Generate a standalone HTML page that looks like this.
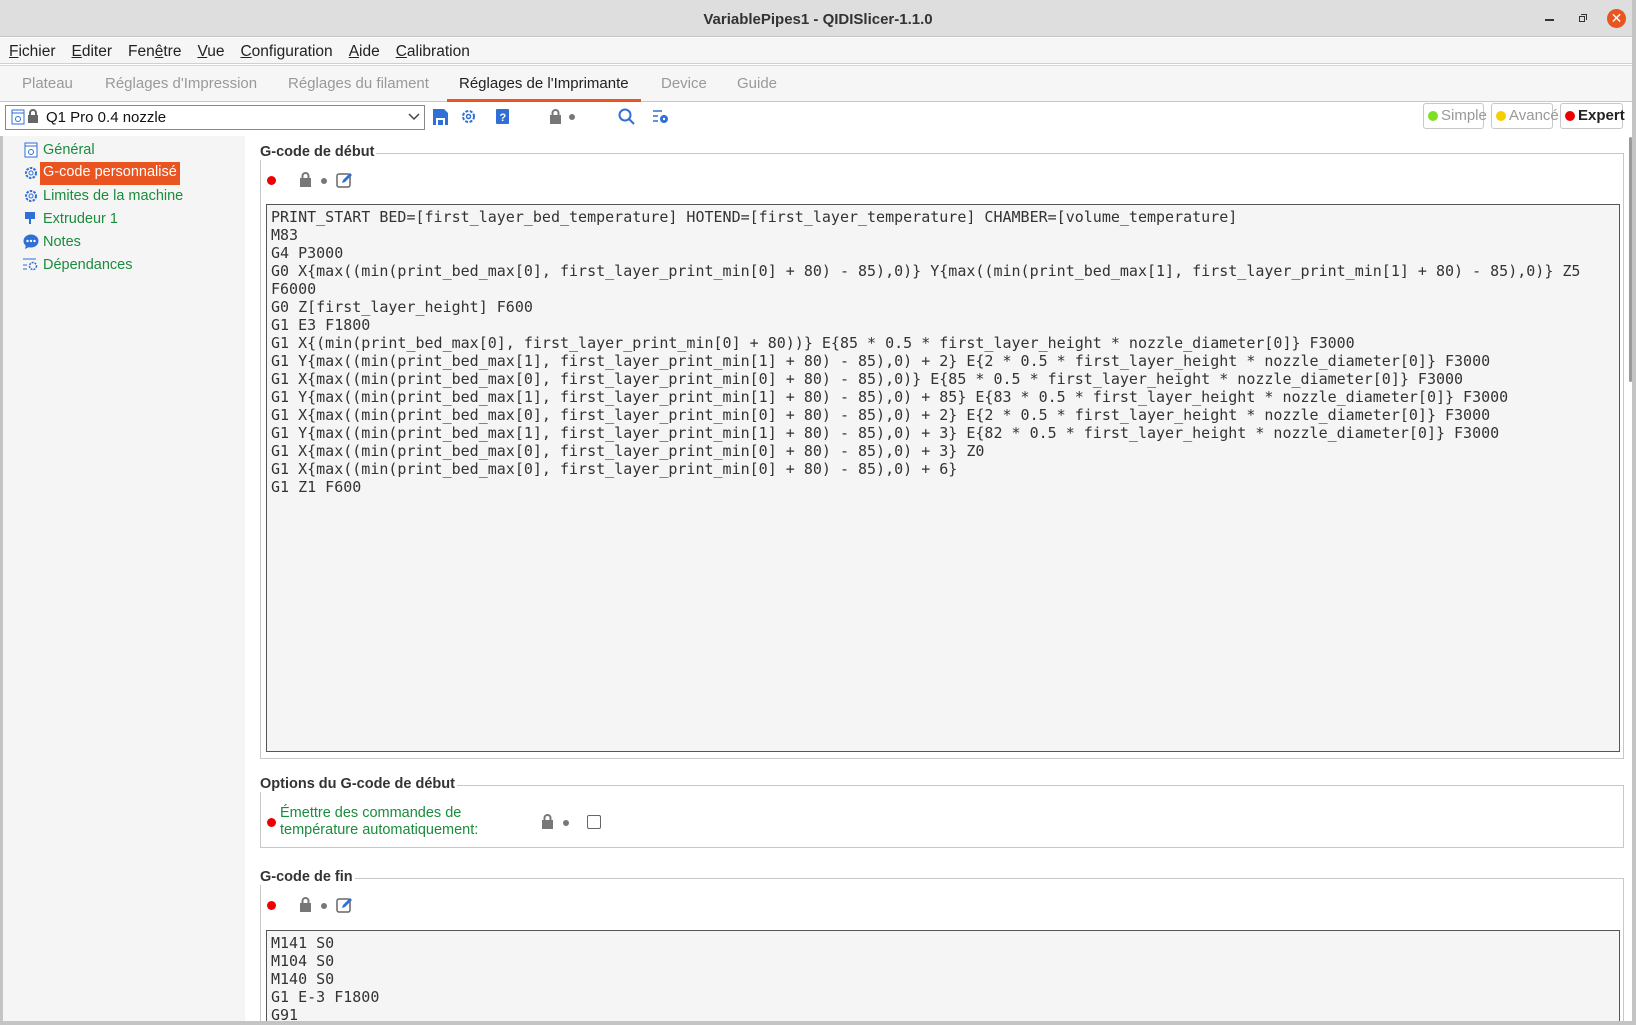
<!DOCTYPE html>
<html><head><meta charset="utf-8"><style>
*{margin:0;padding:0;box-sizing:border-box}
html,body{width:1636px;height:1025px;overflow:hidden}
body{position:relative;background:#fff;font-family:"Liberation Sans","DejaVu Sans",sans-serif;color:#222}
.a{position:absolute;white-space:nowrap}
.mono{font-family:"DejaVu Sans Mono","Liberation Mono",monospace;font-size:15px;line-height:18px;color:#333;white-space:pre}
.menu span{margin-right:16px}
.menu u{text-decoration:underline}
.tab{position:absolute;top:75px;font-size:15px;color:#999}
.side{font-size:14.5px;color:#1a8c3c}
.lbl{font-weight:bold;font-size:14.5px;color:#333;background:#fff;padding-right:2px}
.box{position:absolute;border:1px solid #c8c8c8}
.ta{position:absolute;background:#f5f5f5;border:1px solid #555}
.rdot{width:9px;height:9px;border-radius:50%;background:#e00;position:absolute}
.gdot{width:6px;height:6px;border-radius:50%;background:#777;position:absolute}
.mb{position:absolute;top:103px;height:26px;border:1px solid #c8c8c8;border-radius:3px;font-size:15px;padding-left:17px;line-height:24px;background:#fff}
.mb i{position:absolute;left:4px;top:7px;width:10px;height:10px;border-radius:50%}
</style></head><body>
<div class="a" style="left:0;top:0;width:1636px;height:37px;background:#dedede;border-bottom:1px solid #c4c4c4"></div>
<div class="a" style="left:0;top:11px;width:1636px;text-align:center;font-weight:bold;font-size:15px;color:#333">VariablePipes1 - QIDISlicer-1.1.0</div>
<div class="a" style="left:1545px;top:19px;width:9px;height:1.5px;background:#333"></div>
<div class="a" style="left:1579px;top:16px;width:6px;height:6px;border:1px solid #333"></div>
<div class="a" style="left:1581px;top:14px;width:6px;height:6px;border-top:1px solid #333;border-right:1px solid #333"></div>
<div class="a" style="left:1607px;top:9px;width:19px;height:19px;border-radius:50%;background:#e95420;color:#fff;font-size:14px;text-align:center;line-height:19px">✕</div>
<div class="a" style="left:0;top:38px;width:1636px;height:26px;background:#f6f6f6;border-bottom:1px solid #d0d0d0"></div>
<div class="a menu" style="left:9px;top:43px;font-size:15.5px;color:#222"><span><u>F</u>ichier</span><span><u>E</u>diter</span><span>Fen<u>ê</u>tre</span><span><u>V</u>ue</span><span><u>C</u>onfiguration</span><span><u>A</u>ide</span><span><u>C</u>alibration</span></div>
<div class="a" style="left:0;top:65px;width:1634px;height:37px;background:#f6f6f6;border-bottom:1px solid #c8c8c8;border-top:1px solid #d6d6d6"></div>
<div class="tab" style="left:22px">Plateau</div>
<div class="tab" style="left:105px">Réglages d'Impression</div>
<div class="tab" style="left:288px">Réglages du filament</div>
<div class="tab" style="left:459px;color:#222">Réglages de l'Imprimante</div>
<div class="a" style="left:447px;top:99px;width:194px;height:3px;background:#e95420"></div>
<div class="tab" style="left:661px">Device</div>
<div class="tab" style="left:737px">Guide</div>
<div class="a" style="left:1632px;top:0;width:4px;height:1025px;background:#c4c4c4"></div>
<div class="a" style="left:5px;top:105px;width:420px;height:25px;border:1px solid #888;background:#fff"></div>
<svg class="a" style="left:11px;top:109px" width="14" height="16"><rect x="1" y="1" width="12" height="14" fill="#fff" stroke="#2f6fd6"/><line x1="1" y1="4" x2="13" y2="4" stroke="#2f6fd6"/><circle cx="7" cy="10" r="2.5" fill="none" stroke="#2f6fd6"/></svg>
<svg class="a" style="left:27px;top:109px" width="12" height="15"><rect x="1" y="6" width="10" height="8" fill="#666"/><path d="M3 6V4a3 3 0 0 1 6 0v2" stroke="#666" stroke-width="2" fill="none"/></svg>
<div class="a" style="left:46px;top:109px;font-size:15px;color:#111">Q1 Pro 0.4 nozzle</div>
<svg class="a" style="left:408px;top:113px" width="12" height="8"><path d="M1 1l5 5 5-5" stroke="#444" stroke-width="1.5" fill="none"/></svg>
<svg class="a" style="left:433px;top:109px" width="15" height="16"><path d="M0 0h11l4 4v12H0z" fill="#2f6fd6"/><rect x="3" y="9" width="9" height="7" fill="#fff"/><rect x="5" y="11" width="5" height="5" fill="#2f6fd6"/></svg>
<svg class="a" style="left:461px;top:109px" width="15" height="15"><circle cx="7.5" cy="7.5" r="5.5" fill="none" stroke="#2f6fd6" stroke-width="2" stroke-dasharray="3 1.5"/><circle cx="7.5" cy="7.5" r="2" fill="none" stroke="#2f6fd6" stroke-width="1.5"/></svg>
<svg class="a" style="left:496px;top:109px" width="14" height="16"><rect x="0" y="0" width="13" height="15" rx="1" fill="#2f6fd6"/><text x="3.5" y="12" font-size="11" fill="#fff" font-family="Liberation Sans" font-weight="bold">?</text></svg>
<svg class="a" style="left:550px;top:109px" width="12" height="15"><rect x="0" y="6" width="11" height="9" fill="#777"/><path d="M2.5 6V4a3 3 0 0 1 6 0v2" stroke="#777" stroke-width="2" fill="none"/></svg>
<div class="gdot" style="left:569px;top:114px"></div>
<svg class="a" style="left:618px;top:108px" width="17" height="17"><circle cx="7" cy="7" r="5.5" fill="none" stroke="#2f6fd6" stroke-width="2"/><path d="M11 11l5 5" stroke="#2f6fd6" stroke-width="2"/></svg>
<svg class="a" style="left:653px;top:109px" width="16" height="15"><path d="M0 2h9M0 7h5M0 12h5" stroke="#2f6fd6" stroke-width="1.5"/><circle cx="11" cy="10" r="3.5" fill="#2f6fd6" stroke="#2f6fd6" stroke-width="1"/><circle cx="11" cy="10" r="1.2" fill="#fff"/></svg>
<div class="mb" style="left:1423px;width:61px;color:#999"><i style="background:#7ee026"></i>Simple</div>
<div class="mb" style="left:1491px;width:62px;color:#999"><i style="background:#f5d000"></i>Avancé</div>
<div class="mb" style="left:1560px;width:63px;color:#222;font-weight:bold"><i style="background:#e00"></i>Expert</div>
<div class="a" style="left:3px;top:136px;width:242px;height:885px;background:#f5f5f5"></div>
<div class="a" style="left:0;top:136px;width:3px;height:885px;background:#c4c4c4"></div>
<svg class="a" style="left:24px;top:142px" width="14" height="16"><rect x="1" y="1" width="12" height="14" fill="#fff" stroke="#2f6fd6"/><line x1="1" y1="4" x2="13" y2="4" stroke="#2f6fd6"/><circle cx="7" cy="10" r="2.5" fill="none" stroke="#2f6fd6"/></svg>
<div class="a side" style="left:43px;top:142px">Général</div>
<svg class="a" style="left:24px;top:166px" width="14" height="14"><circle cx="7" cy="7" r="5" fill="none" stroke="#2f6fd6" stroke-width="2" stroke-dasharray="2.5 1.2"/><circle cx="7" cy="7" r="2" fill="none" stroke="#2f6fd6"/></svg>
<div class="a side" style="left:40px;top:162px;background:#e95420;color:#fff;padding:2px 3px;height:23px">G-code personnalisé</div>
<svg class="a" style="left:24px;top:189px" width="14" height="14"><circle cx="7" cy="7" r="5" fill="none" stroke="#2f6fd6" stroke-width="2" stroke-dasharray="2.5 1.2"/><circle cx="7" cy="7" r="2" fill="none" stroke="#2f6fd6"/></svg>
<div class="a side" style="left:43px;top:188px">Limites de la machine</div>
<svg class="a" style="left:25px;top:212px" width="11" height="14"><rect x="0" y="0" width="10" height="7" fill="#2f6fd6"/><rect x="4" y="6" width="2" height="6" fill="#2f6fd6"/></svg>
<div class="a side" style="left:43px;top:211px">Extrudeur 1</div>
<svg class="a" style="left:23px;top:234px" width="16" height="15"><ellipse cx="8" cy="7" rx="7.5" ry="6.5" fill="#2f6fd6"/><path d="M3 11l-1 4 4-2z" fill="#2f6fd6"/><circle cx="4.5" cy="7" r="1.2" fill="#fff"/><circle cx="8" cy="7" r="1.2" fill="#fff"/><circle cx="11.5" cy="7" r="1.2" fill="#fff"/></svg>
<div class="a side" style="left:43px;top:234px">Notes</div>
<svg class="a" style="left:23px;top:258px" width="16" height="14"><path d="M0 1h13M0 7h4M0 11h4" stroke="#2f6fd6"/><circle cx="10" cy="8" r="3.5" fill="none" stroke="#2f6fd6" stroke-width="1.5" stroke-dasharray="2 1"/></svg>
<div class="a side" style="left:43px;top:257px">Dépendances</div>
<div class="box" style="left:260px;top:153px;width:1364px;height:606px"></div>
<div class="a lbl" style="left:260px;top:144px">G-code de début</div>
<div class="rdot" style="left:267px;top:176px"></div>
<svg class="a" style="left:300px;top:172px" width="12" height="15"><rect x="0" y="6" width="11" height="9" fill="#777"/><path d="M2.5 6V4a3 3 0 0 1 6 0v2" stroke="#777" stroke-width="2" fill="none"/></svg>
<div class="gdot" style="left:321px;top:178px"></div>
<svg class="a" style="left:336px;top:171px" width="17" height="17"><rect x="1" y="3" width="13" height="13" rx="2" fill="none" stroke="#666" stroke-width="1.5"/><path d="M6 12l1-3 7-7 2 2-7 7z" fill="#2f6fd6"/></svg>
<div class="ta" style="left:266px;top:204px;width:1354px;height:548px"></div>
<div class="a mono" style="left:271px;top:208px">PRINT_START BED=[first_layer_bed_temperature] HOTEND=[first_layer_temperature] CHAMBER=[volume_temperature]
M83
G4 P3000
G0 X{max((min(print_bed_max[0], first_layer_print_min[0] + 80) - 85),0)} Y{max((min(print_bed_max[1], first_layer_print_min[1] + 80) - 85),0)} Z5
F6000
G0 Z[first_layer_height] F600
G1 E3 F1800
G1 X{(min(print_bed_max[0], first_layer_print_min[0] + 80))} E{85 * 0.5 * first_layer_height * nozzle_diameter[0]} F3000
G1 Y{max((min(print_bed_max[1], first_layer_print_min[1] + 80) - 85),0) + 2} E{2 * 0.5 * first_layer_height * nozzle_diameter[0]} F3000
G1 X{max((min(print_bed_max[0], first_layer_print_min[0] + 80) - 85),0)} E{85 * 0.5 * first_layer_height * nozzle_diameter[0]} F3000
G1 Y{max((min(print_bed_max[1], first_layer_print_min[1] + 80) - 85),0) + 85} E{83 * 0.5 * first_layer_height * nozzle_diameter[0]} F3000
G1 X{max((min(print_bed_max[0], first_layer_print_min[0] + 80) - 85),0) + 2} E{2 * 0.5 * first_layer_height * nozzle_diameter[0]} F3000
G1 Y{max((min(print_bed_max[1], first_layer_print_min[1] + 80) - 85),0) + 3} E{82 * 0.5 * first_layer_height * nozzle_diameter[0]} F3000
G1 X{max((min(print_bed_max[0], first_layer_print_min[0] + 80) - 85),0) + 3} Z0
G1 X{max((min(print_bed_max[0], first_layer_print_min[0] + 80) - 85),0) + 6}
G1 Z1 F600</div>
<div class="a" style="left:1629px;top:137px;width:3px;height:245px;background:#9a9a9a;border-radius:2px"></div>
<div class="box" style="left:260px;top:785px;width:1364px;height:63px"></div>
<div class="a lbl" style="left:260px;top:776px">Options du G-code de début</div>
<div class="rdot" style="left:267px;top:818px"></div>
<div class="a side" style="left:280px;top:805px;line-height:17px">Émettre des commandes de<br>température automatiquement:</div>
<svg class="a" style="left:542px;top:814px" width="12" height="15"><rect x="0" y="6" width="11" height="9" fill="#777"/><path d="M2.5 6V4a3 3 0 0 1 6 0v2" stroke="#777" stroke-width="2" fill="none"/></svg>
<div class="gdot" style="left:563px;top:820px"></div>
<div class="a" style="left:587px;top:815px;width:14px;height:14px;border:1px solid #666;border-radius:2px;background:#fff"></div>
<div class="box" style="left:260px;top:878px;width:1364px;height:143px;border-bottom:none"></div>
<div class="a lbl" style="left:260px;top:869px">G-code de fin</div>
<div class="rdot" style="left:267px;top:901px"></div>
<svg class="a" style="left:300px;top:897px" width="12" height="15"><rect x="0" y="6" width="11" height="9" fill="#777"/><path d="M2.5 6V4a3 3 0 0 1 6 0v2" stroke="#777" stroke-width="2" fill="none"/></svg>
<div class="gdot" style="left:321px;top:903px"></div>
<svg class="a" style="left:336px;top:896px" width="17" height="17"><rect x="1" y="3" width="13" height="13" rx="2" fill="none" stroke="#666" stroke-width="1.5"/><path d="M6 12l1-3 7-7 2 2-7 7z" fill="#2f6fd6"/></svg>
<div class="ta" style="left:266px;top:930px;width:1354px;height:91px;border-bottom:none;overflow:hidden"></div>
<div class="a mono" style="left:271px;top:934px;height:87px;overflow:hidden">M141 S0
M104 S0
M140 S0
G1 E-3 F1800
G91</div>
<div class="a" style="left:0;top:1021px;width:1636px;height:4px;background:#c4c4c4"></div>
</body></html>
